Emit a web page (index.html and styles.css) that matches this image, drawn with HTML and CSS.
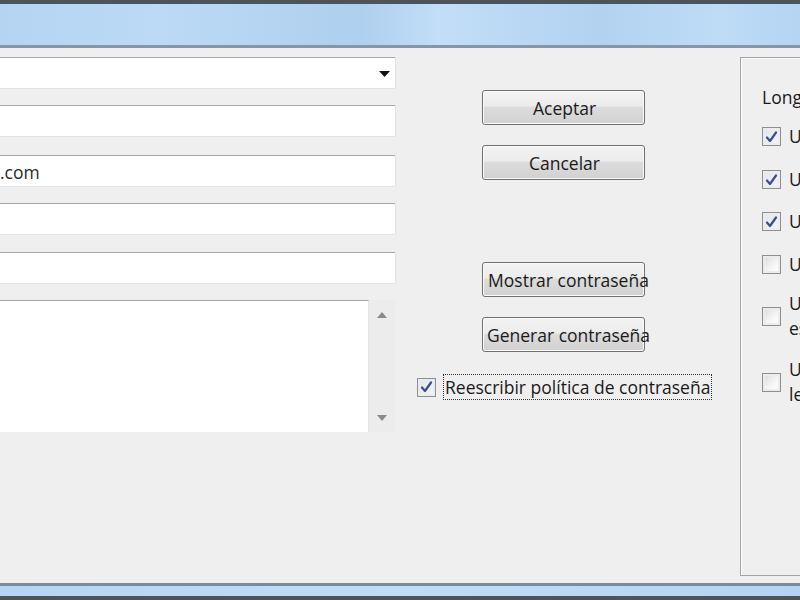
FILE: index.html
```html
<!DOCTYPE html>
<html lang="es">
<head>
<meta charset="utf-8">
<title>Contraseña</title>
<link rel="stylesheet" href="styles.css">
</head>
<body>
<div class="window">
  <div class="titlebar"></div>
  <div class="content">
    <div class="fields">
      <div class="field combo">
        <svg class="combo-arrow" width="11" height="6" viewBox="0 0 11 6"><path d="M0 0H11L5.5 6Z" fill="#111"/></svg>
      </div>
      <div class="field gap16"></div>
      <div class="field gap18"><span class="value">.com</span></div>
      <div class="field gap16"></div>
      <div class="field gap17"></div>
      <div class="memo">
        <div class="memo-box"></div>
        <div class="memo-scroll">
          <svg width="10" height="6" viewBox="0 0 10 6"><path d="M0 6L5 0L10 6Z" fill="#8a8a8a"/></svg>
          <svg width="10" height="6" viewBox="0 0 10 6"><path d="M0 0H10L5 6Z" fill="#8a8a8a"/></svg>
        </div>
      </div>
    </div>
    <div class="actions">
      <button class="btn btn-first">Aceptar</button>
      <button class="btn btn-pair">Cancelar</button>
      <button class="btn btn-wide btn-long">Mostrar contraseña</button>
      <button class="btn btn-pair btn-long">Generar contraseña</button>
      <label class="check-row">
        <span class="cb checked"><svg width="13" height="12" viewBox="0 0 13 12"><path d="M2 6.5L5 10L11 1.5" fill="none" stroke="#3a4f8e" stroke-width="2.2" stroke-linejoin="round" stroke-linecap="round"/></svg></span>
        <span class="focus-label">Reescribir política de contraseña</span>
      </label>
    </div>
    <fieldset class="group">
      <div class="group-title">Longitud</div>
      <div class="opt r1"><span class="cb checked"><svg width="13" height="12" viewBox="0 0 13 12"><path d="M2 6.5L5 10L11 1.5" fill="none" stroke="#3a4f8e" stroke-width="2.2" stroke-linejoin="round" stroke-linecap="round"/></svg></span><span class="opt-text">Usar mayúsculas</span></div>
      <div class="opt r2"><span class="cb checked"><svg width="13" height="12" viewBox="0 0 13 12"><path d="M2 6.5L5 10L11 1.5" fill="none" stroke="#3a4f8e" stroke-width="2.2" stroke-linejoin="round" stroke-linecap="round"/></svg></span><span class="opt-text">Usar minúsculas</span></div>
      <div class="opt r3"><span class="cb checked"><svg width="13" height="12" viewBox="0 0 13 12"><path d="M2 6.5L5 10L11 1.5" fill="none" stroke="#3a4f8e" stroke-width="2.2" stroke-linejoin="round" stroke-linecap="round"/></svg></span><span class="opt-text">Usar números</span></div>
      <div class="opt r4"><span class="cb"></span><span class="opt-text">Usar símbolos</span></div>
      <div class="opt two r5"><span class="cb"></span><span class="opt-text">Usar caracteres<br>especiales</span></div>
      <div class="opt two r6"><span class="cb"></span><span class="opt-text">Usar solo<br>letras</span></div>
    </fieldset>
  </div>
  <div class="bottombar"></div>
</div>
</body>
</html>
```

FILE: styles.css
```css
html, body {
  margin: 0;
  padding: 0;
  width: 800px;
  height: 600px;
  overflow: hidden;
  background: #efefef;
  font-family: "Open Sans", "Noto Sans", "DejaVu Sans", sans-serif;
  color: #1a1a1a;
}

.window {
  display: flex;
  flex-direction: column;
  height: 600px;
}

.titlebar {
  height: 41px;
  border-top: 4px solid #4c535b;
  border-bottom: 3px solid #8497aa;
  background: linear-gradient(90deg, #b4d4f2 0%, #bcdaf5 20%, #aecfee 45%, #c2def8 55%, #b2d2f0 75%, #bedcf6 90%, #b4d4f2 100%);
  flex: none;
}

.content {
  flex: 1;
  display: flex;
  align-items: flex-start;
  padding-top: 9px;
  overflow: hidden;
}

.bottombar {
  flex: none;
  height: 10px;
  border-top: 3px solid #7d8b97;
  border-bottom: 4px solid #4c535b;
  background: linear-gradient(90deg, #b6d5f2, #c0ddf7 50%, #b4d4f1);
}

/* left column */
.fields {
  width: 406px;
  margin-left: -10px;
  display: flex;
  flex-direction: column;
  flex: none;
}

.field {
  height: 30px;
  background: #fff;
  border: 1px solid #e2e2e2;
  border-top: 1px solid #a7a7a7;
  border-radius: 2px;
  display: flex;
  align-items: center;
}

.combo {
  justify-content: flex-end;
  padding-right: 5px;
}

.combo-arrow {
  margin-top: 2px;
}

.gap16 { margin-top: 16px; }
.gap17 { margin-top: 17px; }
.gap18 { margin-top: 18px; }

.value {
  font-size: 17.5px;
  color: #2a2a2a;
  padding-left: 9px;
  margin-top: 1px;
}

.memo {
  margin-top: 16px;
  display: flex;
  height: 132px;
}

.memo-box {
  width: 379px;
  background: #fff;
  border-top: 1px solid #a5a5a5;
  border-right: 1px solid #e4e4e4;
  box-sizing: border-box;
  height: 132px;
}

.memo-scroll {
  width: 26px;
  background: #ececec;
  display: flex;
  flex-direction: column;
  justify-content: space-between;
  align-items: center;
  padding: 12px 0 11px;
  box-sizing: border-box;
}

/* middle column */
.actions {
  width: 300px;
  margin-left: 21px;
  display: flex;
  flex-direction: column;
  align-items: flex-start;
  flex: none;
}

.btn {
  width: 163px;
  height: 35px;
  margin-left: 65px;
  border: 1px solid #707070;
  border-radius: 3px;
  background: linear-gradient(180deg, #f3f3f3 0%, #ececec 45%, #dcdcdc 50%, #d1d1d1 100%);
  box-shadow: inset 0 0 0 1px #fbfbfb;
  font-family: inherit;
  font-size: 17.5px;
  color: #1a1a1a;
  white-space: nowrap;
  display: flex;
  align-items: center;
  justify-content: center;
  padding: 0 0 0 2px;
  overflow: visible;
}

.btn-long { padding-left: 10px; }

.btn-first { margin-top: 33px; }
.btn-pair { margin-top: 20px; }
.btn-wide { margin-top: 82px; }

.check-row {
  margin-top: 22px;
  display: flex;
  align-items: center;
  gap: 7px;
}

.cb {
  width: 19px;
  height: 19px;
  box-sizing: border-box;
  border: 1px solid #8e8f8f;
  background: linear-gradient(135deg, #d9d9d9 0%, #f7f7f7 60%, #ffffff 100%);
  box-shadow: inset 0 0 0 2px #ececec;
  display: flex;
  align-items: center;
  justify-content: center;
  flex: none;
}

.cb.checked {
  background: linear-gradient(135deg, #e2e4ec 0%, #f4f5fa 100%);
}

.focus-label {
  font-size: 17.5px;
  line-height: 24px;
  border: 1px dotted #333;
  padding: 0 1px;
  white-space: nowrap;
}

/* right group box */
.group {
  margin: 0 0 0 23px;
  padding: 0 0 0 21px;
  width: 300px;
  height: 519px;
  border: 1px solid #a4a4a4;
  border-right: none;
  box-sizing: border-box;
  flex: none;
  box-shadow: inset 1px 1px 0 #fafafa;
}

.group-title {
  font-size: 17.5px;
  margin-top: 27px;
  line-height: 24px;
  white-space: nowrap;
}

.opt {
  display: flex;
  align-items: center;
  gap: 8px;
  font-size: 17.5px;
  white-space: nowrap;
}

.opt-text { line-height: 25px; }

.r1 { margin-top: 15px; }
.r2 { margin-top: 18px; }
.r3 { margin-top: 17px; }
.r4 { margin-top: 18px; }
.r5 { margin-top: 14px; }
.r6 { margin-top: 16px; }
```
